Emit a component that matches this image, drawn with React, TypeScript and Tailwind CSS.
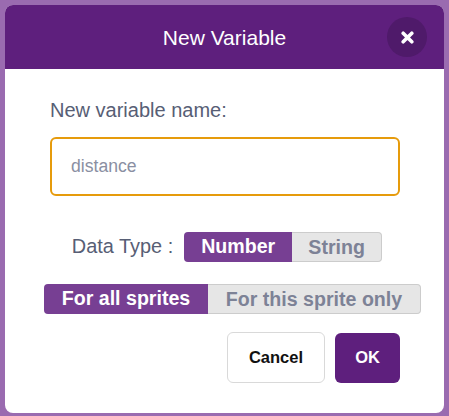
import React, { useState } from 'react';

const App: React.FC = () => {
  const [name, setName] = useState('');
  const [dataType, setDataType] = useState<'number' | 'string'>('number');
  const [scope, setScope] = useState<'all' | 'this'>('all');

  const on = 'shrink-0 bg-[#773f93] text-white font-bold text-[19.6px]';
  const off = 'shrink-0 bg-[#e6e6e6] border border-[#cccccc] text-[#7d8296] font-bold text-[19.6px]';

  return (
    <div className="w-[449px] h-[416px] bg-[#9a6bb0] pt-[5px] px-[5px] overflow-hidden font-['Liberation_Sans',Arial,sans-serif]">
      <div className="h-[408px] rounded-lg overflow-hidden bg-white flex flex-col">
        {/* Header */}
        <div className="h-[64px] bg-[#5e1f7d] flex items-center justify-between pl-[17px] pr-[17px] shrink-0">
          <div className="w-10" />
          <h2 className="text-white text-[21px] leading-none">New Variable</h2>
          <button className="w-10 h-10 rounded-full bg-[#4f1a6a] flex items-center justify-center">
            <svg width="13" height="13" viewBox="0 0 13 13">
              <path d="M2.2 2.2 L10.8 10.8 M10.8 2.2 L2.2 10.8" stroke="#fff" strokeWidth="3.6" strokeLinecap="round" />
            </svg>
          </button>
        </div>

        {/* Body */}
        <div className="flex flex-col pl-[45px] pr-[44px] pt-[29px]">
          <label className="text-[20px] leading-[24px] text-[#575e75]">New variable name:</label>
          <input
            value={name}
            onChange={(e) => setName(e.target.value)}
            placeholder="distance"
            className="mt-[15px] h-[59px] w-full rounded-md border-2 border-[#e69b0c] pl-[19px] text-[17.6px] text-[#575e75] placeholder:text-[#8a8fa2] outline-none"
          />

          <div className="mt-[36px] flex items-center justify-center h-[30px] pl-[4px]">
            <span className="shrink-0 text-[19.9px] text-[#575e75] mr-[11px]">Data Type :</span>
            <div className="flex h-[30px] shrink-0">
              <button
                onClick={() => setDataType('number')}
                className={`w-[108px] rounded-l ${dataType === 'number' ? on : off}`}
              >
                Number
              </button>
              <button
                onClick={() => setDataType('string')}
                className={`w-[90px] rounded-r ${dataType === 'string' ? on : off + ' border-l-0'}`}
              >
                String
              </button>
            </div>
          </div>

          <div className="mt-[22px] flex h-[30px] -ml-[6px]">
            <button
              onClick={() => setScope('all')}
              className={`w-[164px] rounded-l ${scope === 'all' ? on : off}`}
            >
              For all sprites
            </button>
            <button
              onClick={() => setScope('this')}
              className={`w-[213px] rounded-r ${scope === 'this' ? on : off + ' border-l-0'}`}
            >
              For this sprite only
            </button>
          </div>

          <div className="mt-[18px] flex items-center justify-end gap-[10px]">
            <button className="w-[98px] h-[51px] rounded-md border border-[#d9d9d9] bg-white text-[16.5px] font-bold text-[#111111]">
              Cancel
            </button>
            <button className="w-[65px] h-[50px] rounded-md bg-[#5e1f7d] text-[16.5px] font-bold text-white">
              OK
            </button>
          </div>
        </div>
      </div>
    </div>
  );
};

export default App;
